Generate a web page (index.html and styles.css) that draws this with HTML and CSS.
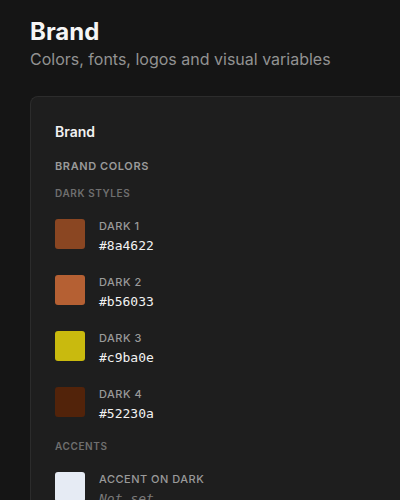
FILE: index.html
```html
<!DOCTYPE html>
<html lang="en">
<head>
  <meta charset="UTF-8" />
  <title>Brand</title>
  <link rel="stylesheet" href="styles.css">
</head>
<body>

  <header class="page-head">
    <h1>Brand</h1>
    <p class="subtitle">Colors, fonts, logos and visual variables</p>
  </header>

  <section class="card">
    <h2 class="card-title">Brand</h2>

    <h3 class="section-label">Brand colors</h3>
    <h4 class="group-label">Dark styles</h4>

    <div class="swatch-list">
      <div class="swatch-row">
        <div class="swatch" style="background: #8a4622"></div>
        <div class="swatch-info">
          <span class="swatch-name">Dark 1</span>
          <code class="swatch-value">#8a4622</code>
        </div>
      </div>
      <div class="swatch-row">
        <div class="swatch" style="background: #b56033"></div>
        <div class="swatch-info">
          <span class="swatch-name">Dark 2</span>
          <code class="swatch-value">#b56033</code>
        </div>
      </div>
      <div class="swatch-row">
        <div class="swatch" style="background: #c9ba0e"></div>
        <div class="swatch-info">
          <span class="swatch-name">Dark 3</span>
          <code class="swatch-value">#c9ba0e</code>
        </div>
      </div>
      <div class="swatch-row">
        <div class="swatch" style="background: #52230a"></div>
        <div class="swatch-info">
          <span class="swatch-name">Dark 4</span>
          <code class="swatch-value">#52230a</code>
        </div>
      </div>
    </div>

    <h4 class="group-label">Accents</h4>

    <div class="swatch-list">
      <div class="swatch-row">
        <div class="swatch" style="background: #e6ebf4"></div>
        <div class="swatch-info">
          <span class="swatch-name">Accent on dark</span>
          <code class="swatch-value empty">Not set</code>
        </div>
      </div>
    </div>
  </section>

</body>
</html>
```

FILE: styles.css
```css
body {
  font-family: Inter, 'Noto Sans', sans-serif;
  margin: 0;
  padding: 0;
  background-color: #151515;
  color: #f2f2f2;
}

.page-head {
  padding: 17px 30px 0;
}

.page-head h1 {
  margin: 0;
  font-size: 24px;
  line-height: 30px;
  font-weight: 700;
  color: #f5f5f5;
}

.subtitle {
  margin: 1px 0 0;
  font-size: 16px;
  line-height: 22px;
  color: #929292;
}

.card {
  margin: 26px 0 0 30px;
  padding: 25px 24px 24px;
  background: #1e1e1e;
  border: 1px solid #2c2c2c;
  border-right: none;
  border-radius: 8px 0 0 8px;
}

.card-title {
  margin: 0;
  font-size: 14px;
  line-height: 20px;
  font-weight: 600;
  color: #f2f2f2;
}

.section-label {
  margin: 16px 0 0;
  font-size: 11px;
  line-height: 16px;
  font-weight: 600;
  letter-spacing: 0.6px;
  text-transform: uppercase;
  color: #9a9a9a;
}

.group-label {
  margin: 12px 0 0;
  font-size: 10px;
  line-height: 14px;
  font-weight: 600;
  letter-spacing: 0.6px;
  text-transform: uppercase;
  color: #6f6f6f;
}

.swatch-list {
  display: flex;
  flex-direction: column;
  gap: 21px;
  margin: 19px 0 17px;
}

.swatch-row {
  display: flex;
  align-items: flex-start;
  gap: 14px;
}

.swatch {
  width: 30px;
  height: 30px;
  border-radius: 3px;
  flex-shrink: 0;
}

.swatch-info {
  display: flex;
  flex-direction: column;
  gap: 5px;
}

.swatch-name {
  font-size: 11px;
  line-height: 14px;
  font-weight: 500;
  letter-spacing: 0.5px;
  text-transform: uppercase;
  color: #9a9a9a;
}

.swatch-value {
  font-family: 'DejaVu Sans Mono', monospace;
  font-size: 13px;
  line-height: 16px;
  color: #f2f2f2;
}

.swatch-value.empty {
  font-style: italic;
  color: #7a7a7a;
}
```
